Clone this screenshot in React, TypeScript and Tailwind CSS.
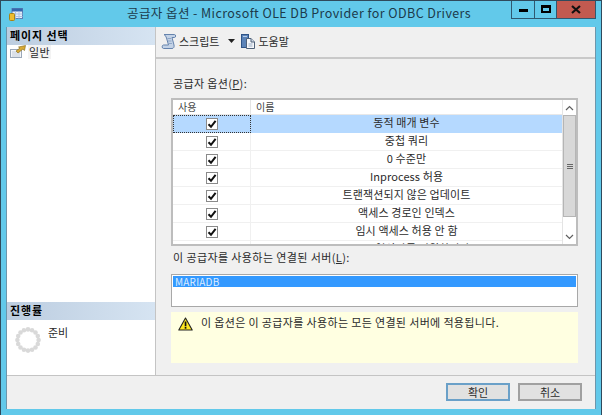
import React from "react";

const FONT = '"Noto Sans CJK KR", "Liberation Sans", sans-serif';

const rows: { name: string; sel?: boolean }[] = [
  { name: "동적 매개 변수", sel: true },
  { name: "중첩 쿼리" },
  { name: "0 수준만" },
  { name: "Inprocess 허용" },
  { name: "트랜잭션되지 않은 업데이트" },
  { name: "액세스 경로인 인덱스" },
  { name: "임시 액세스 허용 안 함" },
  { name: "'LIKE' 연산자를 지원합니다" },
];

function Check() {
  return (
    <span className="flex h-[12px] w-[12px] items-center justify-center border border-[#8a8a8a] bg-white">
      <svg width="10" height="10" viewBox="0 0 10 10">
        <path d="M1.5 5.2 L4 7.8 L8.6 1.8" fill="none" stroke="#111" strokeWidth="2" />
      </svg>
    </span>
  );
}

function WindowIcon() {
  return (
    <svg width="14" height="13" viewBox="0 0 14 13">
      <rect x="3" y="0.5" width="10.5" height="10" fill="#e6eef8" stroke="#5a7fb5" />
      <rect x="3" y="0.5" width="10.5" height="3" fill="#3467ad" />
      <path d="M6.5 3.5v7M10 3.5v7M3 6h10.5M3 8.5h10.5" stroke="#a9c2e2" strokeWidth="1" />
      <rect x="0.5" y="5.5" width="5" height="7" rx="1" fill="#edbd2f" stroke="#a98414" />
    </svg>
  );
}

function GeneralIcon() {
  return (
    <svg width="17" height="13" viewBox="0 0 17 13">
      <rect x="0.5" y="4.5" width="11" height="8" fill="#f3f5f8" stroke="#9aa7b8" />
      <path d="M2 7h8M2 9h8M2 11h8" stroke="#c2cbd8" />
      <path d="M6 6 L10 3 L8.5 2 L15.5 0.5 L14.5 5.5 L12.8 4.2 L8 8 Z" fill="#d9aa35" stroke="#7d6418" strokeWidth="0.6" />
    </svg>
  );
}

function ScriptIcon() {
  return (
    <svg width="16" height="17" viewBox="0 0 16 17">
      <path
        d="M3 1.5 H13.5 C15 1.5 15 4.5 13.5 4.5 H11 L13 12 C13.5 14 12.5 15.5 11 15.5 H2.5 C0.7 15.5 0.7 12 2.5 12 H7.5 L5.5 5 C5 3.5 4 2 3 1.5 Z"
        fill="#c3d2e6"
        stroke="#6583ad"
      />
      <path d="M6.5 5.5h3.5M7 8h3.5M7.8 10.5h3.2" stroke="#8ea6c6" />
    </svg>
  );
}

function HelpIcon() {
  return (
    <svg width="15" height="17" viewBox="0 0 15 17">
      <rect x="0.5" y="1.5" width="7" height="13" fill="#5b83b8" stroke="#2f5487" />
      <path d="M2 3.5h4" stroke="#b9cde6" />
      <path d="M5.5 5.5 H10 L13.5 9 V15.5 H5.5 Z" fill="#f4f6fa" stroke="#4f6179" />
      <path d="M10 5.5 V9 H13.5" fill="#cdd8e6" stroke="#4f6179" />
      <path d="M7.5 11h4M7.5 13h4" stroke="#9badc4" />
    </svg>
  );
}

function Warning() {
  return (
    <svg className="mt-[2px] shrink-0" width="15" height="14" viewBox="0 0 15 14">
      <path d="M7.5 1 L14.2 13 H0.8 Z" fill="#ffe81f" stroke="#222" strokeWidth="1.1" strokeLinejoin="round" />
      <rect x="6.7" y="4.5" width="1.7" height="4.8" fill="#111" />
      <rect x="6.7" y="10" width="1.7" height="1.7" fill="#111" />
    </svg>
  );
}

function Spinner() {
  const dots = Array.from({ length: 16 }, (_, i) => (i * Math.PI * 2) / 16);
  return (
    <svg width="26" height="26" viewBox="0 0 26 26">
      {dots.map((a, i) => (
        <circle key={i} cx={13 + 10.6 * Math.cos(a)} cy={13 + 10.6 * Math.sin(a)} r="2.3" fill="#d9d9d9" />
      ))}
    </svg>
  );
}

function Arrow({ up }: { up?: boolean }) {
  return (
    <svg width="9" height="6" viewBox="0 0 9 6">
      <path d={up ? "M1 5 L4.5 1.5 L8 5" : "M1 1 L4.5 4.5 L8 1"} fill="none" stroke="#606060" strokeWidth="1.2" />
    </svg>
  );
}

function Section({ children }: { children: React.ReactNode }) {
  return (
    <div className="flex h-[18px] items-center bg-gradient-to-r from-[#bccde0] to-[#d6e4f2] pb-[2px] pl-[3px] text-[11px] leading-none font-bold tracking-[0.9px] text-black">
      {children}
    </div>
  );
}

export default function App() {
  return (
    <div
      className="flex h-[415px] w-[602px] flex-col overflow-hidden border-x border-t border-[#2f4a5c] bg-[#62c9ea] text-[#2b2b2b]"
      style={{ fontFamily: FONT }}
    >
      {/* title bar */}
      <div className="relative flex h-[26px] shrink-0 items-center pl-[8px]">
        <WindowIcon />
        <div className="flex-1 pb-[1px] pl-[104px] text-[12.5px] leading-none tracking-[0.42px] text-[#1c3a4a]">
          공급자 옵션 - Microsoft OLE DB Provider for ODBC Drivers
        </div>
        <div className="absolute top-[-1px] right-[5px] flex h-[19px] border-x border-b border-[#2f5870]">
          <div className="flex w-[23px] items-center justify-center border-r border-[#2f5870]">
            <div className="mt-[3px] h-[3px] w-[9px] bg-black" />
          </div>
          <div className="flex w-[22px] items-center justify-center border-r border-[#2f5870]">
            <div className="h-[8px] w-[10px] border-2 border-t-[3px] border-black" />
          </div>
          <div className="flex w-[38px] items-center justify-center bg-[#c25a50]">
            <svg width="10" height="9" viewBox="0 0 10 9">
              <path d="M1 1 L9 8 M9 1 L1 8" stroke="#111" strokeWidth="2.2" />
            </svg>
          </div>
        </div>
      </div>

      {/* client area */}
      <div className="mx-[5px] flex min-h-0 flex-1 flex-col border-x border-[#6d96ab] bg-[#f0f0f0]">
        <div className="flex min-h-0 flex-1 border-b border-[#c4c4c4]">
          {/* sidebar */}
          <div className="flex w-[149px] shrink-0 flex-col border-r border-[#c4c4c4] bg-white">
            <Section>페이지 선택</Section>
            <div className="flex flex-1 items-start gap-[1px] pl-[3px]">
              <GeneralIcon />
              <span className="bg-[#f3f3f3] px-[1px] text-[11px] leading-[14px] tracking-[0.4px]">일반</span>
            </div>
            <Section>진행률</Section>
            <div className="flex h-[55px] shrink-0 gap-[7px] pt-[5px] pl-[8px]">
              <div className="pt-[2px]">
                <Spinner />
              </div>
              <span className="text-[11px] leading-[14px]">준비</span>
            </div>
          </div>

          {/* main */}
          <div className="flex min-w-0 flex-1 flex-col">
            <div className="flex h-[32px] shrink-0 items-center border-b-2 border-[#c9c9c9] pb-[2px] pl-[5px] text-[11px]">
              <ScriptIcon />
              <span className="ml-[2px]">스크립트</span>
              <svg className="ml-[9px]" width="7" height="4" viewBox="0 0 7 4">
                <path d="M0 0 H7 L3.5 4 Z" fill="#222" />
              </svg>
              <span className="ml-[6px]">
                <HelpIcon />
              </span>
              <span className="ml-[2px]">도움말</span>
            </div>

            <div className="flex min-h-0 flex-1 flex-col pt-[17px] pr-[17px] pl-[15px]">
              <div className="h-[22px] pl-[2px] text-[11px] leading-[14px] tracking-[0.35px]">
                공급자 옵션(<span className="underline">P</span>):
              </div>

              {/* grid */}
              <div className="flex h-[148px] shrink-0 border-2 border-[#bdbdbd] bg-white">
                <div className="min-w-0 flex-1 overflow-hidden">
                  <div className="flex h-[15px] border-b border-[#e8e8e8] text-[10px] leading-[14px] text-[#444]">
                    <div className="w-[78px] border-r border-[#e4e4e4] pl-[5px]">사용</div>
                    <div className="pl-[5px]">이름</div>
                  </div>
                  {rows.map((r) => (
                    <div
                      key={r.name}
                      className={
                        r.sel
                          ? "flex h-[18px] bg-[#b5d9ff] text-[11px]"
                          : "flex h-[18px] border-b border-[#f0f0f0] text-[11px]"
                      }
                    >
                      <div
                        className={
                          r.sel
                            ? "flex w-[78px] shrink-0 items-center justify-center border border-dotted border-[#333]"
                            : "flex w-[78px] shrink-0 items-center justify-center border-r border-[#f0f0f0]"
                        }
                      >
                        <Check />
                      </div>
                      <div className="flex-1 text-center leading-[15px] tracking-[0.1px]">{r.name}</div>
                    </div>
                  ))}
                </div>
                <div className="flex w-[14px] shrink-0 flex-col border-l border-[#e4e4e4] bg-white">
                  <div className="flex h-[15px] items-center justify-center">
                    <Arrow up />
                  </div>
                  <div className="flex h-[102px] flex-col items-center justify-center gap-[1px] border border-[#b5b5b5] bg-[#d8d8d8]">
                    <div className="h-px w-[6px] bg-[#666]" />
                    <div className="h-px w-[6px] bg-[#666]" />
                    <div className="h-px w-[6px] bg-[#666]" />
                  </div>
                  <div className="flex-1" />
                  <div className="flex h-[15px] items-center justify-center">
                    <Arrow />
                  </div>
                </div>
              </div>

              <div className="mt-[4px] h-[24px] pl-[2px] text-[11px] leading-[14px] tracking-[0.4px]">
                이 공급자를 사용하는 연결된 서버(<span className="underline">L</span>):
              </div>

              <div className="h-[33px] shrink-0 border border-[#a8a8a8] bg-white p-[1px]">
                <div className="h-[11px] bg-[#3399ff] pl-[2px] text-[10px] leading-[11px] tracking-[0.2px] text-[#dcecff]">
                  MARIADB
                </div>
              </div>

              <div className="mt-[5px] flex h-[51px] shrink-0 items-start bg-[#ffffe1] pt-[3px] pl-[7px]">
                <Warning />
                <span className="ml-[8px] text-[11px] leading-[14px] tracking-[0.35px]">
                  이 옵션은 이 공급자를 사용하는 모든 연결된 서버에 적용됩니다.
                </span>
              </div>
            </div>
          </div>
        </div>

        {/* footer */}
        <div className="flex h-[33px] shrink-0 items-center justify-end gap-[8px] pr-[13px] pb-[1px]">
          <button className="h-[18px] w-[64px] border-2 border-[#6aa0c8] bg-[#e1e1e1] text-[11px] leading-none">
            확인
          </button>
          <button className="h-[18px] w-[64px] border-2 border-[#a0a0a0] bg-[#e1e1e1] text-[11px] leading-none">
            취소
          </button>
        </div>
      </div>
      <div className="h-[6px] shrink-0" />
    </div>
  );
}
